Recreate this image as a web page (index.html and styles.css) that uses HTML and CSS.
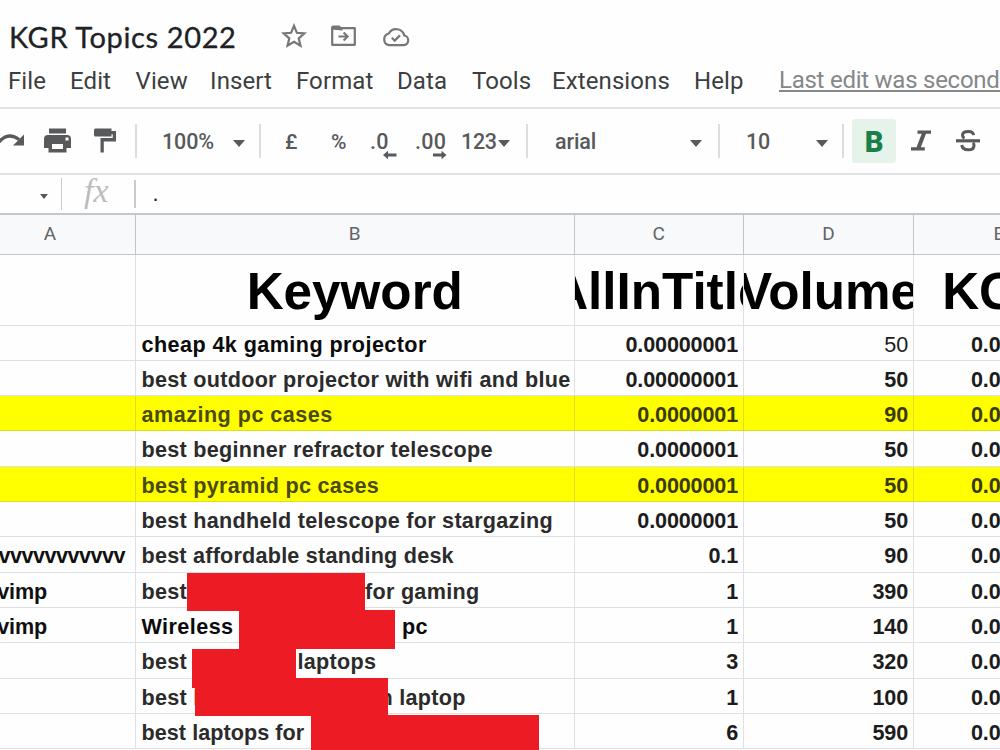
FILE: index.html
```html
<!DOCTYPE html>
<html lang="en">
<head>
<meta charset="utf-8">
<title>KGR Topics 2022</title>
<link rel="stylesheet" href="styles.css">
</head>
<body>
<header class="top">
  <div class="title-row">
    <span class="title">KGR Topics 2022</span>
    <svg class="star" width="26" height="26" viewBox="0 0 26 26"><path d="M13 2.800l2.900 7 7.500.6-5.700 4.900 1.800 7.400-6.500-3.900-6.500 3.900 1.800-7.400-5.700-4.900 7.500-.6z" fill="none" stroke="#747678" stroke-width="2.200"/></svg>
    <svg class="folder" width="28" height="24" viewBox="0 0 28 24"><path d="M2.200 4.200h22.600v16.600H2.200z" fill="none" stroke="#747678" stroke-width="2.200" stroke-linejoin="round"/><path d="M1.200 5.500V3.400Q1.200 1.600 3 1.600h6.500l3 3v2z" fill="#747678"/><path d="M8.500 12.500h8.500M13.600 8.500l4 4-4 4" fill="none" stroke="#747678" stroke-width="2.200"/></svg>
    <svg class="cloud" width="28" height="22" viewBox="0 0 28 22"><path d="M7 19.200h14.500a4.900 4.900 0 0 0 .8-9.700 8.400 8.400 0 0 0-15.500-2A6 6 0 0 0 7 19.200z" fill="none" stroke="#747678" stroke-width="2.200"/><path d="M9.800 11.800l2.900 2.800 5.200-5.200" fill="none" stroke="#747678" stroke-width="2.200"/></svg>
  </div>
  <nav class="menu">
    <span>File</span><span>Edit</span><span>View</span><span>Insert</span><span>Format</span><span>Data</span><span>Tools</span><span>Extensions</span><span>Help</span><span class="last-edit">Last edit was seconds</span>
  </nav>
</header>
<div class="toolbar">
  <svg class="icon" width="44" height="30" viewBox="0 0 44 30"><path d="M-2 17Q8 5 19 13.500" fill="none" stroke="#58595b" stroke-width="3.200"/><path d="M24 8.500v11H13z" fill="#58595b"/></svg>
  <svg class="icon" width="50" height="30" viewBox="0 0 50 30"><path d="M5 2.500h17v5H5zM4 9h19q4 0 4 4v9h-4.500v4.500h-18V22H0v-9q0-4 4-4zM8 18v5h11v-5zM21.500 11.500v3h3v-3z" fill="#58595b" fill-rule="evenodd"/></svg>
  <svg class="icon" width="41" height="30" viewBox="0 0 41 30"><path d="M1.500 2.500h16V5H22v10.500H9.800v11H6.500V12h12.200V8.200h-1.200v2.300h-16Q0 10.500 0 9V4Q0 2.500 1.500 2.500z" fill="#58595b"/></svg>
  <i class="sep"></i>
  <span class="zoomv">100%</span><i class="caret"></i>
  <i class="sep"></i>
  <span class="glyph">£</span><span class="glyph">%</span>
  <span class="dec">.0<svg class="arrow a-left" width="14" height="10" viewBox="0 0 14 10"><path d="M0 5l5-4.200v2.700h8.500v3H5v2.700z" fill="#58595b"/></svg></span>
  <span class="dec">.00<svg class="arrow a-right" width="14" height="10" viewBox="0 0 14 10"><path d="M13.500 5l-5-4.200v2.700H0v3h8.500v2.700z" fill="#58595b"/></svg></span>
  <span class="num">123</span><i class="caret"></i>
  <i class="sep"></i>
  <span class="font">arial</span><i class="caret"></i>
  <i class="sep"></i>
  <span class="size">10</span><i class="caret"></i>
  <i class="sep"></i>
  <span class="bold">B</span>
  <svg class="icon" width="45" height="30" viewBox="0 0 45 30"><path d="M6.500 4.500H20v3.300h-5L9.800 21.200h4V24.500H0v-3.300h5.500l5.200-13.400H6.500z" fill="#58595b"/></svg>
  <svg class="icon" width="26" height="30" viewBox="0 0 26 30"><path d="M0 13.200h24v3.200H0z" fill="#58595b"/><path d="M17.600 9.200Q17.300 5.400 12.200 5.400Q6.500 5.400 6.500 9.200Q6.500 11.200 8.500 12.300M5.800 19Q6.300 23.800 12.200 23.800Q18 23.800 18 19.400Q18 17.800 17 16.800" fill="none" stroke="#58595b" stroke-width="3"/></svg>
</div>
<div class="formula">
  <i class="caret small"></i><i class="sep tall"></i><span class="fx">fx</span><i class="sep"></i><span class="value">.</span>
</div>
<main class="sheet">
  <div class="row letters"><b>A</b><b>B</b><b>C</b><b>D</b><b>E</b></div>
  <div class="row head"><div></div><div>Keyword</div><div>AllInTitle</div><div>Volume</div><div>KGR</div></div>
  <div class="row"><div></div><div class="dark">cheap 4k gaming projector</div><div>0.00000001</div><div class="light">50</div><div>0.0</div></div>
  <div class="row"><div></div><div>best outdoor projector with wifi and blue</div><div>0.00000001</div><div>50</div><div>0.0</div></div>
  <div class="row hl"><div></div><div class="loose">amazing pc cases</div><div>0.0000001</div><div>90</div><div>0.0</div></div>
  <div class="row"><div></div><div>best beginner refractor telescope</div><div>0.0000001</div><div>50</div><div>0.0</div></div>
  <div class="row hl"><div></div><div>best pyramid pc cases</div><div>0.0000001</div><div>50</div><div>0.0</div></div>
  <div class="row"><div></div><div>best handheld telescope for stargazing</div><div>0.0000001</div><div>50</div><div>0.0</div></div>
  <div class="row"><div class="vs">vvvvvvvvvvv</div><div class="snug">best affordable standing desk</div><div>0.1</div><div>90</div><div>0.0</div></div>
  <div class="row"><div class="vimp">vimp</div><div class="split s1"><span>best</span><span>for gaming</span></div><div>1</div><div>390</div><div>0.0</div></div>
  <div class="row"><div class="vimp">vimp</div><div class="split s2 dark"><span>Wireless</span><span>pc</span></div><div>1</div><div>140</div><div>0.0</div></div>
  <div class="row"><div></div><div class="split s3"><span>best</span><span>laptops</span></div><div>3</div><div>320</div><div>0.0</div></div>
  <div class="row"><div></div><div class="split s4"><span>best l</span><span>n laptop</span></div><div>1</div><div>100</div><div>0.0</div></div>
  <div class="row"><div></div><div class="tight">best laptops for</div><div>6</div><div>590</div><div>0.0</div></div>
  <i class="mark m1"></i><i class="mark m2"></i><i class="mark m3"></i><i class="mark m4"></i><i class="mark m5"></i>
</main>
</body>
</html>
```
FILE: styles.css
```css
* { box-sizing: border-box; }
html, body { margin: 0; overflow: hidden; }
body {
  width: 1000px; height: 750px;
  background: #fefefe; color: #58595b;
  font-family: Roboto, "Liberation Sans", sans-serif;
}
.top { height: 109px; border-bottom: 2px solid #e1e2e3; }
.title-row { display: flex; height: 62px; padding: 18px 0 0 9px; }
.title { width: 272px; font: 29px/37px Lato, sans-serif; color: #202124; letter-spacing: .62px; -webkit-text-stroke: .3px #202124; white-space: nowrap; }
.star { margin-right: 23px; margin-top: 5px; }
.folder { margin-right: 24px; margin-top: 6px; }
.cloud { margin-top: 8px; }
.menu {
  display: grid; padding-left: 8px; overflow: hidden;
  grid-template-columns: 62px 65.500px 74.500px 86px 101px 75px 80px 142px 85px 221px;
  font-size: 24px; line-height: 39px; color: #3c3e40; letter-spacing: .1px; white-space: nowrap;
}
.last-edit { overflow: hidden; color: #858789; line-height: 36px; text-decoration: underline; text-underline-offset: 2px; text-decoration-thickness: 2px; text-decoration-skip-ink: none; letter-spacing: -.25px; }
.toolbar {
  display: grid; height: 66px; align-items: center; border-bottom: 2px solid #e1e2e3;
  grid-template-columns: 44px 50px 41px 27px 70px 27px 26px 46px 39px 45px 46px 36px 29px 29px 134px 29px 28px 69px 27px 10px 59px 45px 44px;
  font-size: 21.500px; font-weight: 500; letter-spacing: -.1px; white-space: nowrap;
}
.icon { display: block; }
.sep { width: 1.500px; height: 34px; background: #dcddde; }
.caret { width: 0; height: 0; border: 6.500px solid transparent; border-top: 7px solid #58595b; border-bottom: 0; margin-top: 4px; }
.toolbar .caret { margin-left: .5px; }
.glyph { font-size: 21px; padding-top: 2px; }
.dec { position: relative; letter-spacing: .3px; }
.num { letter-spacing: -.3px; }
.arrow { position: absolute; top: 21px; }
.a-left { left: 13px; }
.a-right { left: 18px; }
.bold { width: 44px; height: 44px; border-radius: 3px; background: #e6f3ea; color: #188048; font-weight: 900; font-size: 29px; line-height: 46px; text-align: center; }
.formula { display: flex; height: 38px; align-items: center; background: #fefefe; }
.caret.small { border-width: 5px 4.500px 0; margin-left: 40px; margin-right: 12.500px; }
.formula .sep { height: 28px; background: #c9cacb; }
.formula .sep.tall { height: 32px; }
.fx { width: 72px; padding-left: 22px; font: italic 34px/34px "Liberation Serif", serif; color: #bcbdbe; transform: translateY(-3px); }
.value { padding-left: 17px; font: 22px/32px "Liberation Sans", sans-serif; color: #222; }
.sheet { position: relative; font-family: "Liberation Sans", Arial, sans-serif; }
.row {
  display: grid; grid-template-columns: 136px 438.500px 169.500px 170px 86px;
  height: 35.330px; font-size: 21.600px; font-weight: 700; line-height: 37px; color: #1c1c1c;
}
.row > * { overflow: hidden; white-space: nowrap; border-right: 1.500px solid #dfe0e1; border-bottom: 1.500px solid #dfe0e1; text-align: right; padding-right: 5px; letter-spacing: -.16px; }
.row > :last-child { border-right: 0; }
.row > :nth-child(2) { text-align: left; padding: 0 0 0 5.500px; color: #2b2b2b; letter-spacing: .28px; }
.row > :nth-child(5) { text-align: left; padding-left: 57px; }
.row > .dark:nth-child(2) { color: #0b0b0b; letter-spacing: .42px; }
.row > .loose:nth-child(2) { letter-spacing: .48px; }
.row > .snug:nth-child(2) { letter-spacing: .22px; }
.row > .tight:nth-child(2) { letter-spacing: .05px; }
.row > .light { font-weight: 400; }
.hl { background: #ff0; }
.hl > * { border-color: #dede20; color: #3a3a08; }
.row.hl > :nth-child(2) { color: #4a4a0a; }
.letters { height: 42px; font: 400 19px/38px Roboto, sans-serif; background: #f8f9fa; border-top: 2px solid #c6c7c8; }
.row.letters > b:nth-child(n) { font-weight: 400; border-color: #c3c4c5; text-align: center; padding: 0; color: #626466; letter-spacing: 0; }
.row.letters > b:first-child { padding-right: 35px; }
.row.letters > b:last-child { margin-right: -84px; }
.head { height: 70.500px; font-size: 51.200px; line-height: 74px; color: #000; }
.row.head > :nth-child(n) { display: flex; justify-content: center; padding: 0; color: #000; letter-spacing: 0; }
.row.head > :last-child { margin-right: -84px; }
.row > .vs { display: flex; justify-content: flex-end; padding-right: 10px; color: #111; letter-spacing: -.5px; }
.row > .vimp { display: flex; justify-content: flex-end; padding-right: 88px; color: #111; }
.split { display: flex; }
.split span { flex: none; }
.s1 span:first-child { width: 223.500px; }
.s2 span:first-child { width: 260.500px; }
.s3 span:first-child { width: 156px; }
.s4 span:first-child { width: 238px; }
.mark { position: absolute; background: #ed1c24; }
.m1 { left: 187px; top: 360px; width: 178px; height: 38px; }
.m2 { left: 239px; top: 397px; width: 156px; height: 39px; }
.m3 { left: 192px; top: 436px; width: 104px; height: 39px; }
.m4 { left: 195px; top: 465px; width: 193px; height: 38px; }
.m5 { left: 311px; top: 502px; width: 228px; height: 40px; }
```
